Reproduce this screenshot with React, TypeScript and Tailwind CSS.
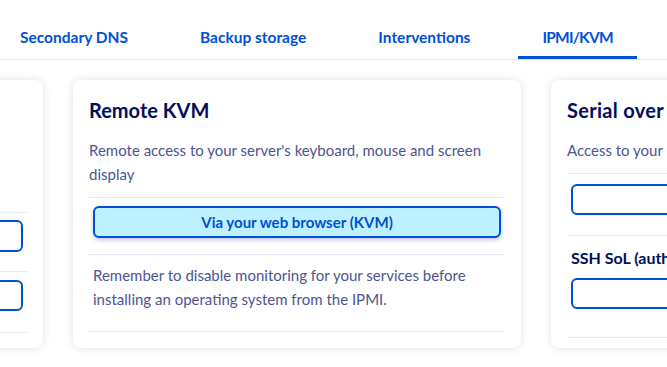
const tabs = ['Secondary DNS', 'Backup storage', 'Interventions', 'IPMI/KVM']

function Separator() {
  return <div className="h-px bg-[#e6e7f0]" />
}

function OutlineButton({ label }: { label?: string }) {
  return (
    <button className="w-full h-[31px] rounded-md border-2 border-[#0050d7] bg-white text-[15px] font-bold text-[#0050d7]">
      {label}
    </button>
  )
}

export default function App() {
  return (
    <div
      className="w-[667px] h-[367px] overflow-hidden bg-white"
      style={{ fontFamily: 'Lato, "Open Sans", sans-serif' }}
    >
      <div className="h-[60px] border-b border-[#e3e8f4] flex gap-6 ml-[-4px]">
        {tabs.map((tab) => (
          <div
            key={tab}
            className={
              'px-6 pb-[9px] flex items-end text-[15.5px] leading-5 font-bold text-[#0050d7] whitespace-nowrap border-b-[3px] ' +
              (tab === 'IPMI/KVM' ? 'border-[#0050d7] tracking-[-0.8px]' : 'border-transparent')
            }
          >
            {tab}
          </div>
        ))}
      </div>

      <div className="flex gap-[30px] ml-[-405px] mt-5">
        {/* left card (mostly off screen) */}
        <div className="w-[448px] h-[268px] shrink-0 rounded-lg bg-white shadow-[0_0_8px_rgba(0,14,156,0.13)] px-4 pt-4">
          <h2 className="text-xl font-bold text-[#000e5c] leading-7">IPMI</h2>
          <p className="mt-[14px] text-[15px] leading-6 text-[#4d5592] w-[300px]">
            Test the IPMI on your server
          </p>
          <div className="mt-[50px]">
            <Separator />
          </div>
          <div className="pt-[7px] pb-[15px] pr-1">
            <button className="w-full h-[32px] rounded-md border-2 border-[#0050d7] bg-white" />
          </div>
          <Separator />
          <div className="pt-2 pb-[17px] pr-1">
            <OutlineButton />
          </div>
          <Separator />
        </div>

        {/* middle card */}
        <div className="w-[448px] h-[268px] shrink-0 rounded-lg bg-white shadow-[0_0_8px_rgba(0,14,156,0.13)] px-4 pt-4">
          <h2 className="text-xl font-bold text-[#000e5c] leading-7">Remote KVM</h2>
          <p className="mt-[14px] text-[15px] leading-6 text-[#4d5592]">
            Remote access to your server's keyboard, mouse and screen display
          </p>
          <div className="mt-[11px]">
            <Separator />
          </div>
          <div className="px-1 pt-2 pb-4">
            <button className="w-full h-[32px] rounded-md border-2 border-[#0050d7] bg-[#bef1ff] text-[15px] font-bold text-[#0050d7] shadow-[0_2px_4px_rgba(0,14,156,0.25)]">
              Via your web browser (KVM)
            </button>
          </div>
          <Separator />
          <p className="px-1 pt-[8px] pb-5 text-[15px] leading-6 text-[#4d5592]">
            Remember to disable monitoring for your services before installing an operating system from the IPMI.
          </p>
          <Separator />
        </div>

        {/* right card */}
        <div className="w-[448px] h-[268px] shrink-0 rounded-lg bg-white shadow-[0_0_8px_rgba(0,14,156,0.13)] px-4 pt-4">
          <h2 className="text-xl font-bold text-[#000e5c] leading-7 whitespace-nowrap tracking-[0.3px]">Serial over LAN (SoL)</h2>
          <p className="mt-[14px] text-[15px] leading-6 text-[#4d5592] whitespace-nowrap">
            Access to your server via a serial console
          </p>
          <div className="mt-[11px]">
            <Separator />
          </div>
          <div className="px-1 pt-[10px] pb-4">
            <OutlineButton />
          </div>
          <Separator />
          <h3 className="mt-[10px] px-1 text-base font-bold text-[#000e5c] leading-6 whitespace-nowrap">
            SSH SoL (authentication by key)
          </h3>
          <div className="px-1 pt-2 pb-6">
            <OutlineButton />
          </div>
          <Separator />
        </div>
      </div>
    </div>
  )
}
